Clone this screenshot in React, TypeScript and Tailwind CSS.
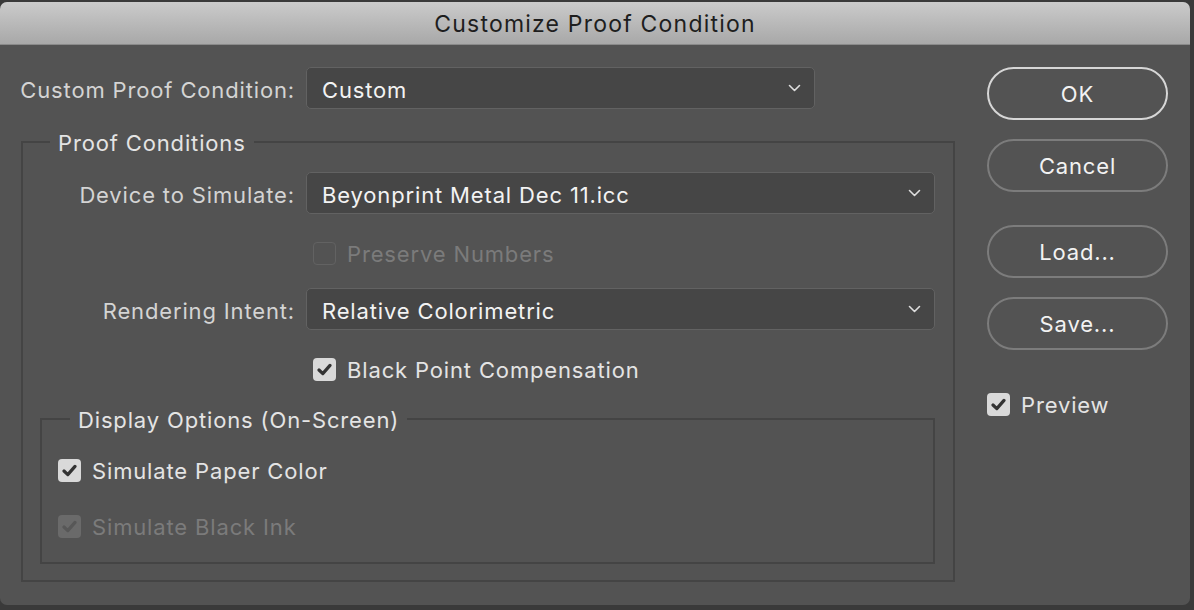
import type { ReactNode } from "react";

const FONT = { fontFamily: "Inter, 'Open Sans', sans-serif" };

function Chevron() {
  return (
    <svg width="13" height="8" viewBox="0 0 13 8" className="shrink-0">
      <path d="M1.5 1.5 L6.5 6.5 L11.5 1.5" fill="none" stroke="#dedede" strokeWidth="1.6" strokeLinecap="round" strokeLinejoin="round" />
    </svg>
  );
}

function Select({ value, width }: { value: string; width: string }) {
  return (
    <div className={`flex h-[42px] ${width} items-center justify-between rounded-[5px] border border-[#626262] bg-[#464646] pl-[15px] pr-[13px]`}>
      <span className="pt-[3px] text-[22px] leading-[26px] tracking-[0.85px] text-[#f3f3f3]">{value}</span>
      <Chevron />
    </div>
  );
}

function Check({
  checked,
  disabled,
  label,
}: {
  checked?: boolean;
  disabled?: boolean;
  label: string;
}) {
  let box = "border border-[#626262] bg-[#535353]";
  let mark = "#333333";
  if (checked && !disabled) box = "bg-[#d9d9d9]";
  if (checked && disabled) {
    box = "bg-[#6a6a6a]";
    mark = "#575757";
  }
  return (
    <div className="flex h-[24px] items-center gap-[11px]">
      <div className={`flex h-[23px] w-[23px] items-center justify-center rounded-[4px] ${box}`}>
        {checked && (
          <svg width="15" height="13" viewBox="0 0 15 13">
            <path d="M2 7 L5.8 10.6 L13 2.4" fill="none" stroke={mark} strokeWidth="3.2" strokeLinecap="round" strokeLinejoin="round" />
          </svg>
        )}
      </div>
      <span className={`pt-[2px] text-[22px] leading-[26px] tracking-[0.85px] ${disabled ? "text-[#7b7b7b]" : "text-[#e4e4e4]"}`}>{label}</span>
    </div>
  );
}

function Button({ children, primary }: { children: ReactNode; primary?: boolean }) {
  return (
    <button
      type="button"
      className={`flex h-[53px] w-[181px] items-center justify-center rounded-full border-2 pt-[2px] text-[22px] tracking-[0.85px] text-[#f2f2f2] ${
        primary ? "border-[#d6d6d6]" : "border-[#7c7c7c]"
      }`}
    >
      {children}
    </button>
  );
}

function Row({ label, children }: { label: string; children: ReactNode }) {
  return (
    <div className="flex items-center gap-[11px]">
      <span className="w-[272px] pt-[3px] text-right text-[22px] leading-[26px] tracking-[0.85px] text-[#d4d4d4]">{label}</span>
      {children}
    </div>
  );
}

export default function App() {
  return (
    <div className="h-[610px] w-[1194px] overflow-hidden bg-[#3a3a3a] pt-[2px]" style={FONT}>
      <div className="flex h-[603px] w-[1190px] flex-col overflow-hidden rounded-[7px] bg-[#535353]">
        <div className="flex h-[43px] shrink-0 items-center justify-center border-b border-[#8a8a8a] bg-gradient-to-b from-[#cbcbcb] to-[#a8a8a8]">
          <span className="pt-[2px] text-[23px] tracking-[1.2px] text-[#1e1e1e]">Customize Proof Condition</span>
        </div>

        <div className="flex flex-1 pt-[22px]">
          <div className="flex w-[955px] flex-col">
            <div className="flex items-center gap-[11px] pl-[18px]">
              <span className="w-[277px] whitespace-nowrap pt-[3px] text-right text-[22px] leading-[26px] tracking-[0.85px] text-[#d4d4d4]">Custom Proof Condition:</span>
              <Select value="Custom" width="w-[509px]" />
            </div>

            <fieldset className="ml-[21px] mt-[19px] border-2 border-[#444444] pb-[16px] pr-[18px]">
              <legend className="ml-[27px] px-[8px] pt-[3px] text-[22px] leading-[24px] tracking-[0.85px] text-[#e4e4e4]">Proof Conditions</legend>

              <div className="mt-[17px]">
                <Row label="Device to Simulate:">
                  <Select value="Beyonprint Metal Dec 11.icc" width="w-[629px]" />
                </Row>
              </div>
              <div className="mt-[27px] pl-[290px]">
                <Check disabled label="Preserve Numbers" />
              </div>
              <div className="mt-[23px]">
                <Row label="Rendering Intent:">
                  <Select value="Relative Colorimetric" width="w-[629px]" />
                </Row>
              </div>
              <div className="mt-[27px] pl-[290px]">
                <Check checked label="Black Point Compensation" />
              </div>

              <fieldset className="ml-[17px] mt-[24px] border-2 border-[#444444] pb-[24px] pl-[16px]">
                <legend className="ml-[12px] px-[8px] pt-[3px] text-[22px] leading-[24px] tracking-[0.85px] text-[#e4e4e4]">Display Options (On-Screen)</legend>
                <div className="mt-[26px]">
                  <Check checked label="Simulate Paper Color" />
                </div>
                <div className="mt-[32px]">
                  <Check checked disabled label="Simulate Black Ink" />
                </div>
              </fieldset>
            </fieldset>
          </div>

          <div className="ml-[32px] flex flex-col">
            <Button primary>OK</Button>
            <div className="mt-[19px]">
              <Button>Cancel</Button>
            </div>
            <div className="mt-[33px]">
              <Button>Load...</Button>
            </div>
            <div className="mt-[19px]">
              <Button>Save...</Button>
            </div>
            <div className="mt-[42px]">
              <Check checked label="Preview" />
            </div>
          </div>
        </div>
      </div>
    </div>
  );
}
